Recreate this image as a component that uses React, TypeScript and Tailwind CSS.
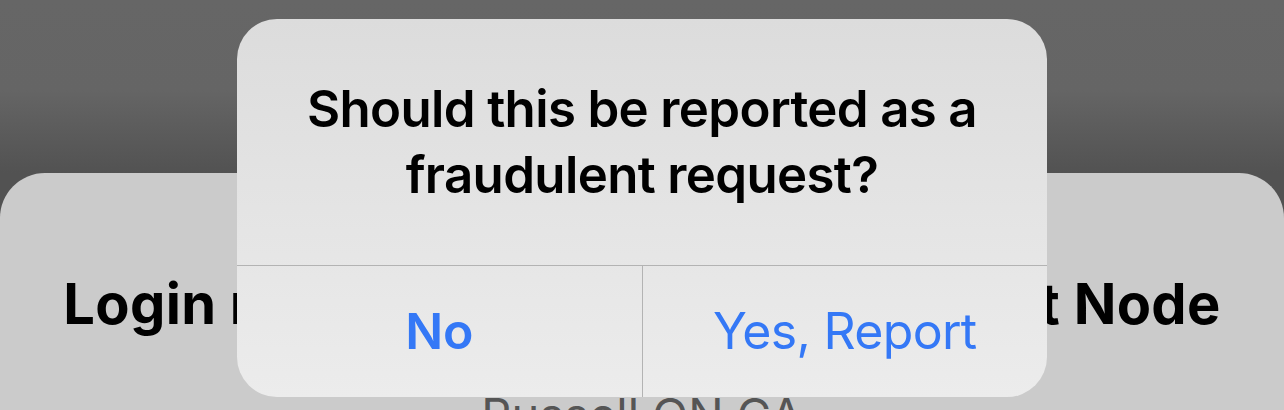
export default function App() {
  return (
    <div className="relative h-[410px] w-full overflow-hidden bg-[linear-gradient(to_bottom,#666666_0px,#656565_90px,#525252_173px)] font-['Inter',sans-serif]">
      <div className="mt-[173px] flex h-[300px] flex-col items-center rounded-t-[45px] bg-[#cbcbcb]">
        <div className="mt-[97px] whitespace-nowrap text-[56px] font-bold leading-[68px] tracking-[0.3px] text-black">
          Login request from Midpoint District Node
        </div>
        <div className="mt-[50px] whitespace-nowrap text-[47px] leading-[54px] text-[#555555]">
          Russell ON CA
        </div>
      </div>

      <div className="absolute left-[237px] top-[19px] flex w-[810px] flex-col overflow-hidden rounded-[40px] bg-[linear-gradient(to_bottom,#dcdcdc,#ececec)]">
        <div className="px-[40px] pb-[57px] pt-[57px] text-center text-[51px] font-semibold leading-[66px] tracking-[-0.65px] text-black">
          Should this be reported as a
          <br />
          fraudulent request?
        </div>
        <div className="flex h-[132px] border-t border-[#b3b3b3]">
          <div className="flex flex-1 items-center justify-center text-[50px] font-semibold tracking-[-0.3px] text-[#3478f6]">
            No
          </div>
          <div className="w-px bg-[#b3b3b3]" />
          <div className="flex flex-1 items-center justify-center text-[50px] font-normal tracking-[-0.7px] text-[#3478f6]">
            Yes, Report
          </div>
        </div>
      </div>
    </div>
  );
}
